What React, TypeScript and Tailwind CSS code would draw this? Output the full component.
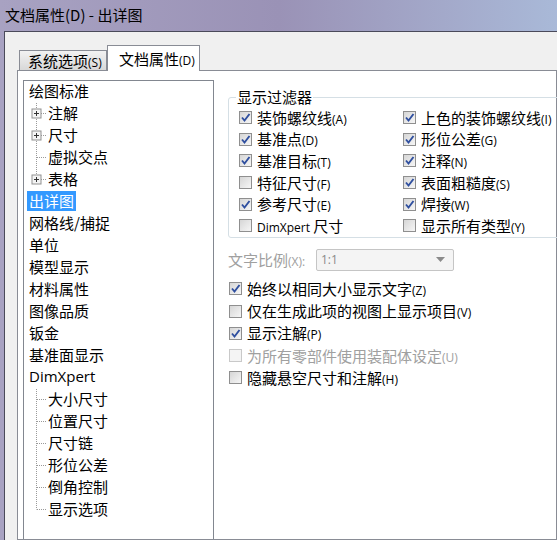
import React from "react";

const cjk = { fontFamily: '"Noto Sans CJK SC", "Noto Sans", sans-serif' };
const latin = { fontFamily: '"Open Sans", "Noto Sans", sans-serif' };

type TreeRow = { text: string; level: number; plus?: boolean; last?: boolean; selected?: boolean };

const treeRows: TreeRow[] = [
  { text: "绘图标准", level: 0 },
  { text: "注解", level: 1, plus: true },
  { text: "尺寸", level: 1, plus: true },
  { text: "虚拟交点", level: 1 },
  { text: "表格", level: 1, plus: true, last: true },
  { text: "出详图", level: 0, selected: true },
  { text: "网格线/捕捉", level: 0 },
  { text: "单位", level: 0 },
  { text: "模型显示", level: 0 },
  { text: "材料属性", level: 0 },
  { text: "图像品质", level: 0 },
  { text: "钣金", level: 0 },
  { text: "基准面显示", level: 0 },
  { text: "DimXpert", level: 0 },
  { text: "大小尺寸", level: 1 },
  { text: "位置尺寸", level: 1 },
  { text: "尺寸链", level: 1 },
  { text: "形位公差", level: 1 },
  { text: "倒角控制", level: 1 },
  { text: "显示选项", level: 1, last: true },
];

function Connector({ plus, last }: { plus?: boolean; last?: boolean }) {
  return (
    <svg width="19" height="22" viewBox="0 0 19 22" className="shrink-0">
      <line x1="7.5" y1="0" x2="7.5" y2={last ? 10.5 : 22} stroke="#9a9a9a" strokeDasharray="1 1" />
      <line x1="8" y1="10.5" x2="18" y2="10.5" stroke="#9a9a9a" strokeDasharray="1 1" />
      {plus && (
        <g>
          <rect x="3" y="6" width="9" height="9" fill="#f4f4f4" stroke="#919191" />
          <line x1="5" y1="10.5" x2="10" y2="10.5" stroke="#333" />
          <line x1="7.5" y1="8" x2="7.5" y2="13" stroke="#333" />
        </g>
      )}
    </svg>
  );
}

function Check({ checked, disabled }: { checked?: boolean; disabled?: boolean }) {
  return (
    <span
      className={
        "relative flex h-[13px] w-[13px] shrink-0 items-center justify-center border " +
        (disabled ? "border-[#c9c9c9] bg-[#f4f4f4]" : "border-[#8f8f8f] bg-gradient-to-br from-[#d6d6d6] to-[#f6f6f6]")
      }
    >
      {checked && (
        <svg width="11" height="11" viewBox="0 0 11 11">
          <path d="M2 5.5 L4.5 8.5 L9.5 2" fill="none" stroke="#2f4f9f" strokeWidth="1.9" />
        </svg>
      )}
    </span>
  );
}

function Label({ main, key2, pre, disabled }: { main: string; key2?: string; pre?: string; disabled?: boolean }) {
  return (
    <span className={"whitespace-nowrap text-[15px] leading-none " + (disabled ? "text-[#a0a0a0]" : "text-black")} style={cjk}>
      {pre && (
        <span className="text-[12px]" style={latin}>
          {pre}
        </span>
      )}
      {main}
      {key2 && (
        <span className="text-[12px]" style={latin}>
          {key2}
        </span>
      )}
    </span>
  );
}

function CheckRow({ checked, main, key2, pre, disabled, h }: { checked?: boolean; main: string; key2?: string; pre?: string; disabled?: boolean; h: string }) {
  return (
    <div className={"flex items-center gap-[5px] " + h}>
      <Check checked={checked} disabled={disabled} />
      <Label main={main} key2={key2} pre={pre} disabled={disabled} />
    </div>
  );
}

export default function App() {
  const filterLeft = [
    { c: true, m: "装饰螺纹线", k: "(A)", p: "" },
    { c: true, m: "基准点", k: "(D)", p: "" },
    { c: true, m: "基准目标", k: "(T)", p: "" },
    { c: false, m: "特征尺寸", k: "(F)", p: "" },
    { c: true, m: "参考尺寸", k: "(E)", p: "" },
    { c: false, m: "尺寸", k: "", p: "DimXpert " },
  ];
  const filterRight = [
    { c: true, m: "上色的装饰螺纹线", k: "(I)", p: "" },
    { c: true, m: "形位公差", k: "(G)", p: "" },
    { c: true, m: "注释", k: "(N)", p: "" },
    { c: true, m: "表面粗糙度", k: "(S)", p: "" },
    { c: true, m: "焊接", k: "(W)", p: "" },
    { c: false, m: "显示所有类型", k: "(Y)", p: "" },
  ];

  return (
    <div className="flex h-[540px] w-[557px] flex-col overflow-hidden bg-gradient-to-r from-[#a8a2c2] via-[#9a92b6] to-[#a9b9d8]" style={cjk}>
      {/* title bar */}
      <div className="flex h-[31px] shrink-0 items-center pl-[5px] text-[15px] text-black" style={cjk}>
        文档属性(D) - 出详图
      </div>

      {/* client area */}
      <div className="ml-[4px] flex flex-1 flex-col border-l border-t border-[#4a4a5a] bg-[#f0f0f0]">
        {/* tabs */}
        <div className="flex items-end pl-[14px] pt-[13px]">
          <div className="flex h-[20px] w-[88px] items-center border border-b-0 border-[#898c95] bg-gradient-to-b from-[#f2f2f2] to-[#d8d8d8] pl-[8px]">
            <Label main="系统选项" key2="(S)" />
          </div>
          <div className="relative z-10 -mb-px flex h-[26px] w-[93px] items-center border border-b-0 border-[#898c95] bg-white pl-[11px]">
            <Label main="文档属性" key2="(D)" />
          </div>
        </div>

        {/* tab panel */}
        <div className="ml-[12px] flex flex-1 border border-[#898c95] bg-white pl-[5px] pt-[9px]">
          {/* tree */}
          <div className="w-[191px] shrink-0 border border-b-0 border-[#828790] bg-white pl-[5px]">
            {treeRows.map((r, i) => (
              <div key={i} className="flex h-[22px] items-start">
                {r.level === 1 && <Connector plus={r.plus} last={r.last} />}
                <span
                  className={
                    "flex h-[20px] items-center whitespace-nowrap pb-[2px] text-[15px] leading-none " +
                    (r.selected ? "-ml-[2px] bg-[#3399ff] px-[2px] text-white" : "text-black")
                  }
                  style={r.text === "DimXpert" ? latin : cjk}
                >
                  {r.text}
                </span>
              </div>
            ))}
          </div>

          {/* right side */}
          <div className="ml-[14px] flex flex-col pt-[7px]">
            <fieldset className="w-[345px] rounded-[3px] border border-[#d5dfe5] pl-[10px]">
              <legend className="-ml-[3px] h-[20px] px-[1px] text-[15px] leading-[20px] text-black" style={cjk}>
                显示过滤器
              </legend>
              <div className="flex">
                <div className="flex w-[164px] flex-col">
                  {filterLeft.map((f, i) => (
                    <CheckRow key={i} checked={f.c} main={f.m} key2={f.k} pre={f.p} h="h-[21.6px]" />
                  ))}
                </div>
                <div className="flex flex-col">
                  {filterRight.map((f, i) => (
                    <CheckRow key={i} checked={f.c} main={f.m} key2={f.k} h="h-[21.6px]" />
                  ))}
                </div>
              </div>
            </fieldset>

            <div className="mt-[11px] flex h-[22px] items-center">
              <span className="w-[88px] whitespace-nowrap text-[15px] leading-none text-[#a0a0a0]" style={cjk}>
                文字比例<span className="text-[12px]" style={latin}>(X):</span>
              </span>
              <div className="flex h-[22px] w-[138px] items-center justify-between rounded-[2px] border border-[#c5c5c5] bg-[#f4f4f4] pl-[4px] pr-[8px]">
                <span className="text-[12px] text-[#8a8a8a]" style={latin}>
                  1:1
                </span>
                <svg width="9" height="5" viewBox="0 0 9 5">
                  <path d="M0 0 L9 0 L4.5 5 Z" fill="#8a8a8a" />
                </svg>
              </div>
            </div>

            <div className="mt-[7px] flex flex-col pl-[1px]">
              <CheckRow checked main="始终以相同大小显示文字" key2="(Z)" h="h-[22.3px]" />
              <CheckRow main="仅在生成此项的视图上显示项目" key2="(V)" h="h-[22.3px]" />
              <CheckRow checked main="显示注解" key2="(P)" h="h-[22.3px]" />
              <CheckRow disabled main="为所有零部件使用装配体设定" key2="(U)" h="h-[22.3px]" />
              <CheckRow main="隐藏悬空尺寸和注解" key2="(H)" h="h-[22.3px]" />
            </div>
          </div>
        </div>
      </div>
    </div>
  );
}
